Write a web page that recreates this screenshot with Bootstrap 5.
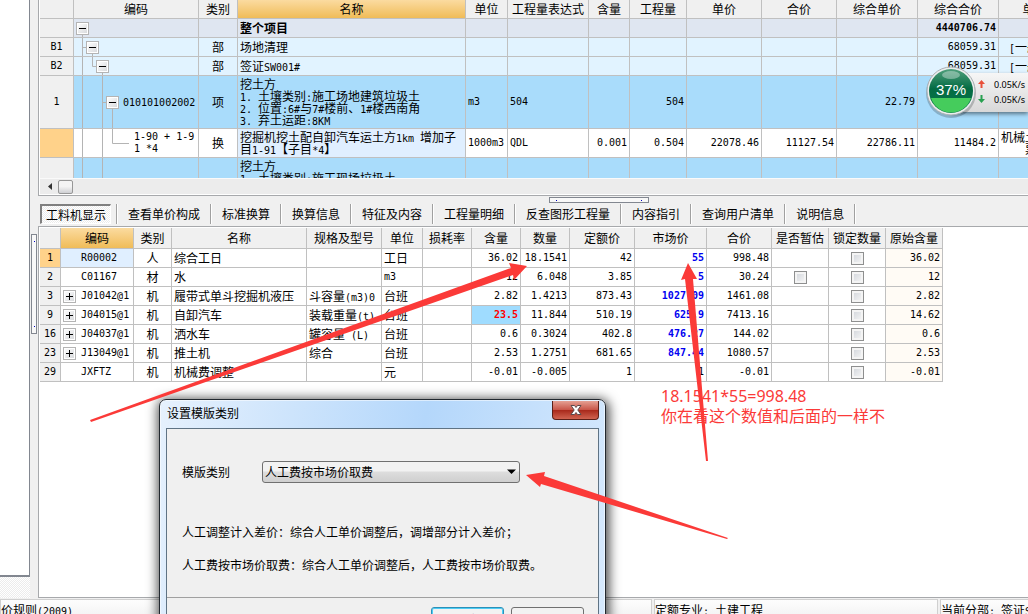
<!DOCTYPE html>
<html lang="zh-CN">
<head>
<meta charset="utf-8">
<meta name="viewport" content="width=device-width, initial-scale=1">
<title>设置模版类别</title>
<link href="https://cdn.jsdelivr.net/npm/bootstrap@5.3.0/dist/css/bootstrap.min.css" rel="stylesheet">
<script src="https://cdn.jsdelivr.net/npm/bootstrap@5.3.0/dist/js/bootstrap.bundle.min.js"></script>
<style>
  body { font: 12px/12px "Noto Sans CJK SC", sans-serif; color: #000; background: #f0f0f0; }
  button, select { font: inherit; color: inherit; }
  .ascii, .num { font-family: "DejaVu Sans Mono", monospace; font-size: 10px; line-height: 12px; }
  span.ascii { line-height: 1px; }

  /* shell */
  .side { width: 30px; }
  .side-tree { background: #fff; border-right: 1px solid #828790; border-bottom: 2px solid #828790; }
  .side-foot { height: 21px; background: repeating-conic-gradient(#fff 0 25%, #ececec 0 50%) 0 0/2px 2px; }
  .gutter { width: 8px; padding: 234px 1px 0 1px; }
  .grip { border: 1px solid #828790; background: #f8f8f8; }
  .grip::before, .grip::after { content: ""; width: 1px; height: 1px; background: #0000c0; }
  .grip-v { height: 100px; width: 6px; padding: 6px 0; }
  .grip-h { width: 100px; height: 6px; padding: 0 6px; top: 1px; left: 511px; }
  .pane { border: 1px solid #a7a9ac; border-right: 0; padding-left: 1px; }
  .pane-top { border-top: 0; background: #fff; }
  .pane-bottom { background: #fff; padding-top: 1px; }

  /* data grids */
  .sheet { table-layout: fixed; border-collapse: separate; border-spacing: 0; width: 0; }
  .sheet th, .sheet td { border-right: 1px solid #c0c0c0; border-bottom: 1px solid #c0c0c0; padding: 0 2px; overflow: hidden; white-space: nowrap; vertical-align: middle; font-weight: 400; }
  .sheet thead th { background: #f0f0f0; text-align: center; padding: 0; }
  .sheet tbody th { background: #f0f0f0; text-align: center; padding: 0; }
  .sheet thead th.on { background: linear-gradient(#fbdba0, #f0bc58); }
  .sheet tbody th.on { background: #ffd28a; }
  .sheet .num { text-align: right; }
  .sheet .c { text-align: center; }
  .sheet .wrap { white-space: normal; }
  .sheet .fee { padding-left: 10px; }
  .r18 { height: 19px; }
  .r20 { height: 21px; }
  .sheet .total td { background: #dfe6f1; font-weight: 700; }
  .part td { background: #e1f3ff; }
  .item { height: 53px; }
  .item td { background: #a9dcfb; }
  .sub { height: 29px; }
  .grid-window { height: 178px; overflow: hidden; background: #a9dcfb; }
  .tree { position: relative; }
  .tree svg { position: absolute; left: 0; top: 0; }
  .toggle { position: relative; width: 13px; height: 13px; border: 1px solid #b4b4b4; padding: 0; background: linear-gradient(135deg, #fff, #d5d7da); box-shadow: inset 0 0 0 1px #fff; display: flex; align-items: center; justify-content: center; flex: none; }
  .toggle::before { content: ""; width: 7px; height: 1px; background: #000; position: absolute; }
  .toggle.plus::after { content: ""; width: 1px; height: 7px; background: #000; position: absolute; }
  .lv1 { margin-left: 10px; } .lv2 { margin-left: 20px; } .lv3 { margin-left: 30px; } .lv4 { margin-left: 58px; }
  .code { padding-left: 5px; }
  .leaf { padding-left: 18px; }
  .sheet .price { color: #0000f0; font-weight: 700; }
  .sheet .warn { background: #9fdcff; color: #f00; font-weight: 700; }
  .sheet .orig { background: #fffbf5; }
  .sheet .cur { background: #e0efff; }
  .tick { appearance: none; width: 13px; height: 13px; margin: 0; display: block; border: 1px solid #8e8f8f; background: linear-gradient(135deg, #cfd3d9, #f8f8f8); box-shadow: inset 0 0 0 2px #f4f4f4; margin-inline: auto; }

  /* scrollbar */
  .hbar { height: 17px; background: #ececec; border-top: 1px solid #fafafa; border-bottom: 1px solid #fff; }
  .hbar .thumb { width: 15px; height: 14px; border: 1px solid #979797; border-radius: 2px; background: linear-gradient(#f4f4f4 45%, #cfd0d3); }

  /* tabs */
  .tabs { height: 30px; padding: 8px 0 2px 2px; }
  .tabs button { border: 0; border-right: 1px solid #a0a0a0; box-shadow: 1px 0 #fff; background: none; padding: 0 10px; margin-right: 1px; height: 20px; white-space: nowrap; }
  .tabs button.on { border: solid; border-width: 2px 1px 1px 2px; border-color: #808080 #fff #fff #808080; box-shadow: none; padding: 0 4px; margin: 0; width: 71px; background: repeating-conic-gradient(#fff 0 25%, #ececec 0 50%) 0 0/2px 2px; }
  .tabs .gap { width: 6px; margin-right: 1px; border-right: 1px solid #a0a0a0; height: 20px; box-shadow: 1px 0 #fff; }

  /* status bar */
  .status { height: 15px; overflow: hidden; margin-top: 1px; gap: 2px; }
  .status div { height: 24px; line-height: 19px; border: 1px solid #d0d0d0; background: linear-gradient(#fdfdfd, #f0f0f0); white-space: nowrap; overflow: hidden; flex: none; }
  .st-a { width: 652px; } .st-b { width: 284px; } .st-c { width: 200px; }

  /* dialog */
  .dlg { left: 159px; top: 399px; width: 447px; height: 250px; padding: 1px 6px 6px 6px; border: 1px solid #22282f; border-radius: 7px; background: linear-gradient(100deg, #e6f1fd, #b4d7fb 55%, #d8eafd); box-shadow: 0 0 0 1px #fff8 inset, 1px 2px 12px 2px #000b; }
  .dlg-title { height: 27px; }
  .dlg-title h1 { font: inherit; margin: 0; padding: 6px 1px; }
  .dlg-title .x { width: 47px; height: 19px; border: 1px solid #5c2018; border-top: 0; border-radius: 0 0 4px 4px; padding: 0; background: linear-gradient(#e5a093, #c9574a 48%, #a92a1c 52%, #d06350); }
  .dlg-body { height: 214px; border: 1px solid #5f7384; background: #f0f0f0; }
  .dlg-body .fields { padding: 32px 15px 0 15px; height: 168px; }
  .dlg-body label { width: 80px; }
  .dlg-body .hint { margin: 0 0 21px; }
  .pick { margin-bottom: 43px; }
  .combo { appearance: none; width: 258px; height: 22px; padding: 0 2px; border: 1px solid #707070; border-radius: 3px; background: linear-gradient(#f2f2f2 45%, #dddddd 50%, #cfcfcf); }
  .combo-box svg { right: 4px; top: 8px; pointer-events: none; }
  .dlg-foot { border-top: 1px solid #a0a0a0; padding: 9px 14px; gap: 7px; }
  .dlg-foot button { width: 73px; height: 25px; border: 1px solid #707070; border-radius: 3px; background: linear-gradient(#f2f2f2 50%, #d4d4d4); padding: 0; }
  .dlg-foot .ok { border-color: #2c90b8; box-shadow: inset 0 0 0 1px #4ccdf5; }

  /* annotations and speed widget */
  .note { left: 661px; top: 386px; color: #fb3a38; font: 16px/20px "Noto Sans", "Noto Sans CJK SC", sans-serif; }
  .speed { right: 0; top: 66px; height: 50px; width: 102px; padding-top: 7px; }
  .speed .pill { margin-left: 25px; height: 39px; background: linear-gradient(#f6f6f6, #d8d8d8); box-shadow: 0 2px 4px #0007; font: 9px/15px "Noto Sans", sans-serif; padding: 0 0 2px 26px; }
  .speed svg.ball { left: -2px; top: -1px; }
</style>
</head>
<body>
<div class="vh-100 d-flex flex-column overflow-hidden position-relative">
  <div class="d-flex flex-grow-1 overflow-hidden">
    <aside class="side d-flex flex-column flex-shrink-0">
      <div class="side-tree flex-grow-1"></div>
      <div class="side-foot"></div>
    </aside>
    <div class="gutter flex-shrink-0"><div class="grip grip-v d-flex flex-column justify-content-between align-items-center"></div></div>

    <main class="flex-grow-1 d-flex flex-column overflow-hidden">
      <section class="pane pane-top">
        <div class="grid-window">
          <table class="sheet">
            <colgroup><col style="width:34px"><col style="width:125px"><col style="width:39px"><col style="width:228px"><col style="width:42px"><col style="width:81px"><col style="width:41px"><col style="width:57px"><col style="width:75px"><col style="width:75px"><col style="width:81px"><col style="width:81px"><col style="width:120px"></colgroup>
            <thead><tr class="r18"><th></th><th>编码</th><th>类别</th><th class="on">名称</th><th>单位</th><th>工程量表达式</th><th>含量</th><th>工程量</th><th>单价</th><th>合价</th><th>综合单价</th><th>综合合价</th><th>单价构成文件</th></tr></thead>
            <tbody>
              <tr class="r18 total"><th></th><td class="tree"><svg width="30" height="19" fill="none" stroke="#b4b4b4"><path d="M8.5 9V19"/></svg><button class="toggle" aria-label="折叠"></button></td><td></td><td>整个项目</td><td></td><td></td><td></td><td></td><td></td><td></td><td></td><td class="num">4440706.74</td><td></td></tr>
              <tr class="r18 part"><th class="ascii">B1</th><td class="tree"><svg width="40" height="19" fill="none" stroke="#b4b4b4"><path d="M8.5 0V19M8.5 9.5H16M18.5 9V19"/></svg><button class="toggle lv1" aria-label="折叠"></button></td><td class="c">部</td><td>场地清理</td><td></td><td></td><td></td><td></td><td></td><td></td><td></td><td class="num">68059.31</td><td class="fee"><span class="ascii">[</span>一般土建工程<span class="ascii">]</span></td></tr>
              <tr class="r18 part"><th class="ascii">B2</th><td class="tree"><svg width="40" height="19" fill="none" stroke="#b4b4b4"><path d="M8.5 0V19M18.5 0V9.5H26M28.5 9V19"/></svg><button class="toggle lv2" aria-label="折叠"></button></td><td class="c">部</td><td>签证<span class="ascii">SW001#</span></td><td></td><td></td><td></td><td></td><td></td><td></td><td></td><td class="num">68059.31</td><td class="fee"><span class="ascii">[</span>一般土建工程<span class="ascii">]</span></td></tr>
              <tr class="item"><th class="ascii">1</th><td class="tree"><svg width="50" height="53" fill="none" stroke="#b4b4b4"><path d="M8.5 0V53M28.5 0V53M28.5 26.5H36M38.5 26V53"/></svg><div class="d-flex align-items-center"><button class="toggle lv3" aria-label="折叠"></button><span class="ascii ms-1">010101002002</span></div></td><td class="c">项</td><td>挖土方<br><span class="ascii">1. </span>土壤类别<span class="ascii">:</span>施工场地建筑垃圾土<br><span class="ascii">2. </span>位置<span class="ascii">:6#</span>与<span class="ascii">7#</span>楼前、<span class="ascii">1#</span>楼西南角<br><span class="ascii">3. </span>弃土运距<span class="ascii">:8KM</span></td><td class="ascii">m3</td><td class="ascii">504</td><td></td><td class="num">504</td><td></td><td></td><td class="num">22.79</td><td></td><td></td></tr>
              <tr class="sub"><th class="on"></th><td class="tree bg-white"><svg width="60" height="29" fill="none" stroke="#b4b4b4"><path d="M8.5 0V29M28.5 0V29M38.5 0V14.5H55"/></svg><div class="ascii lv4">1-90 + 1-9<br>1 *4</div></td><td class="c bg-white">换</td><td class="cur wrap">挖掘机挖土配自卸汽车运土方<span class="ascii">1km </span>增加子<br>目<span class="ascii">1-91</span>【子目<span class="ascii">*4</span>】</td><td class="ascii bg-white">1000m3</td><td class="ascii bg-white">QDL</td><td class="num bg-white">0.001</td><td class="num bg-white">0.504</td><td class="num bg-white">22078.46</td><td class="num bg-white">11127.54</td><td class="num bg-white">22786.11</td><td class="num bg-white">11484.2</td><td class="bg-white">机械土石方工程<br>　　票据</td></tr>
              <tr class="item"><th></th><td class="tree"><svg width="50" height="53" fill="none" stroke="#b4b4b4"><path d="M8.5 0V53M28.5 0V53"/></svg></td><td></td><td>挖土方<br><span class="ascii">1. </span>土壤类别<span class="ascii">:</span>施工现场垃圾土<br><span class="ascii">2. </span>位置<br><span class="ascii">3. </span>弃土运距</td><td></td><td></td><td></td><td></td><td></td><td></td><td></td><td></td><td></td></tr>
            </tbody>
          </table>
        </div>
        <div class="hbar d-flex align-items-center">
          <svg class="mx-1" width="10" height="9" aria-hidden="true"><path d="M8 1V8L4 4.500Z" fill="#333"/></svg><div class="thumb"></div>
        </div>
      </section>

      <nav class="tabs d-flex position-relative flex-shrink-0">
        <div class="grip grip-h d-flex justify-content-between align-items-center position-absolute"></div>
        <button class="on">工料机显示</button><span class="gap"></span>
        <button>查看单价构成</button><button>标准换算</button><button>换算信息</button><button>特征及内容</button><button>工程量明细</button><button>反查图形工程量</button><button>内容指引</button><button>查询用户清单</button><button>说明信息</button>
      </nav>

      <section class="pane pane-bottom flex-grow-1 overflow-hidden">
        <table class="sheet">
          <colgroup><col style="width:21px"><col style="width:73px"><col style="width:38px"><col style="width:135px"><col style="width:75px"><col style="width:41px"><col style="width:49px"><col style="width:49px"><col style="width:49px"><col style="width:65px"><col style="width:72px"><col style="width:65px"><col style="width:57px"><col style="width:57px"><col style="width:57px"></colgroup>
          <thead><tr class="r20"><th></th><th class="on">编码</th><th>类别</th><th>名称</th><th>规格及型号</th><th>单位</th><th>损耗率</th><th>含量</th><th>数量</th><th>定额价</th><th>市场价</th><th>合价</th><th>是否暂估</th><th>锁定数量</th><th>原始含量</th></tr></thead>
          <tbody>
            <tr class="r18"><th class="ascii on">1</th><td class="ascii cur"><span class="leaf">R00002</span></td><td class="c">人</td><td>综合工日</td><td></td><td>工日</td><td></td><td class="num">36.02</td><td class="num">18.1541</td><td class="num">42</td><td class="num price">55</td><td class="num">998.48</td><td></td><td><input type="checkbox" class="tick" aria-label="锁定数量"></td><td class="num orig">36.02</td></tr>
            <tr class="r18"><th class="ascii">2</th><td class="ascii"><span class="leaf">C01167</span></td><td class="c">材</td><td>水</td><td></td><td class="ascii">m3</td><td></td><td class="num">12</td><td class="num">6.048</td><td class="num">3.85</td><td class="num price">5</td><td class="num">30.24</td><td><input type="checkbox" class="tick" aria-label="是否暂估"></td><td><input type="checkbox" class="tick" aria-label="锁定数量"></td><td class="num orig">12</td></tr>
            <tr class="r18"><th class="ascii">3</th><td class="ascii"><div class="d-flex align-items-center"><button class="toggle plus" aria-label="展开"></button><span class="code">J01042@1</span></div></td><td class="c">机</td><td>履带式单斗挖掘机液压</td><td>斗容量<span class="ascii">(m3)0</span></td><td>台班</td><td></td><td class="num">2.82</td><td class="num">1.4213</td><td class="num">873.43</td><td class="num price">1027.09</td><td class="num">1461.08</td><td></td><td><input type="checkbox" class="tick" aria-label="锁定数量"></td><td class="num orig">2.82</td></tr>
            <tr class="r18"><th class="ascii">9</th><td class="ascii"><div class="d-flex align-items-center"><button class="toggle plus" aria-label="展开"></button><span class="code">J04015@1</span></div></td><td class="c">机</td><td>自卸汽车</td><td>装载重量<span class="ascii">(t)</span></td><td>台班</td><td></td><td class="num warn">23.5</td><td class="num">11.844</td><td class="num">510.19</td><td class="num price">625.9</td><td class="num">7413.16</td><td></td><td><input type="checkbox" class="tick" aria-label="锁定数量"></td><td class="num orig">14.62</td></tr>
            <tr class="r18"><th class="ascii">16</th><td class="ascii"><div class="d-flex align-items-center"><button class="toggle plus" aria-label="展开"></button><span class="code">J04037@1</span></div></td><td class="c">机</td><td>洒水车</td><td>罐容量<span class="ascii"> (L)</span></td><td>台班</td><td></td><td class="num">0.6</td><td class="num">0.3024</td><td class="num">402.8</td><td class="num price">476.27</td><td class="num">144.02</td><td></td><td><input type="checkbox" class="tick" aria-label="锁定数量"></td><td class="num orig">0.6</td></tr>
            <tr class="r18"><th class="ascii">23</th><td class="ascii"><div class="d-flex align-items-center"><button class="toggle plus" aria-label="展开"></button><span class="code">J13049@1</span></div></td><td class="c">机</td><td>推土机</td><td>综合</td><td>台班</td><td></td><td class="num">2.53</td><td class="num">1.2751</td><td class="num">681.65</td><td class="num price">847.44</td><td class="num">1080.57</td><td></td><td><input type="checkbox" class="tick" aria-label="锁定数量"></td><td class="num orig">2.53</td></tr>
            <tr class="r18"><th class="ascii">29</th><td class="ascii"><span class="leaf">JXFTZ</span></td><td class="c">机</td><td>机械费调整</td><td></td><td>元</td><td></td><td class="num">-0.01</td><td class="num">-0.005</td><td class="num">1</td><td class="num">1</td><td class="num">-0.01</td><td></td><td><input type="checkbox" class="tick" aria-label="锁定数量"></td><td class="num orig">-0.01</td></tr>
          </tbody>
        </table>
      </section>
    </main>
  </div>

  <footer class="status d-flex flex-shrink-0">
    <div class="st-a">价规则<span class="ascii">(2009)</span></div>
    <div class="st-b">定额专业<span class="ascii">: </span>土建工程</div>
    <div class="st-c">当前分部<span class="ascii">: </span>签证<span class="ascii">SW001#</span></div>
  </footer>

  <section class="dlg position-absolute" role="dialog" aria-labelledby="dlg-name">
    <header class="dlg-title d-flex justify-content-between align-items-start">
      <h1 id="dlg-name">设置模版类别</h1>
      <button class="x" aria-label="关闭"><svg class="d-block mx-auto" width="12" height="10" viewBox="0 0 12 10"><path d="M1 .5H4.500L6 2.500 7.500 .5H11L7.800 5 11 9.500H7.500L6 7.500 4.500 9.500H1L4.200 5Z" fill="#fff" stroke="#5b4a4c"/></svg></button>
    </header>
    <div class="dlg-body">
      <div class="fields">
        <div class="pick d-flex align-items-center">
          <label for="kind">模版类别</label>
          <div class="combo-box position-relative"><select id="kind" class="combo"><option>人工费按市场价取费</option></select><svg class="position-absolute" width="9" height="6"><path d="M0 .5H9L4.500 5Z"/></svg></div>
        </div>
        <p class="hint">人工调整计入差价：综合人工单价调整后，调增部分计入差价；</p>
        <p class="hint">人工费按市场价取费：综合人工单价调整后，人工费按市场价取费。</p>
      </div>
      <div class="dlg-foot d-flex justify-content-end"><button class="ok">确定</button><button>取消</button></div>
    </div>
  </section>

  <div class="note position-absolute">18.1541*55=998.48<br>你在看这个数值和后面的一样不</div>

  <svg class="position-absolute top-0 start-0 pe-none" width="1028" height="614" fill="#fb3a38" aria-hidden="true">
    <path d="M90 420L511 268 509 263 527 266 514 280 513 275 91 422Z"/>
    <path d="M708 461L706 461 685 279 681 280 688 263 697 279 693 279Z"/>
    <path d="M728 538L544 476 545 472 526 475 540 487 541 484 727 539Z"/>
  </svg>

  <div class="speed position-absolute">
    <div class="pill d-flex flex-column justify-content-center">
      <div class="d-flex align-items-center"><svg class="me-2" width="9" height="8"><path d="M4.500 0L8 4H5.500V8H3.500V4H1Z" fill="#e8503a"/></svg>0.05K/s</div>
      <div class="d-flex align-items-center"><svg class="me-2" width="9" height="8"><path d="M4.500 8L8 4H5.500V0H3.500V4H1Z" fill="#28a050"/></svg>0.05K/s</div>
    </div>
    <svg class="ball position-absolute" width="54" height="54" viewBox="0 0 54 54">
      <defs><linearGradient id="g" x2="0" y2="1"><stop offset="0" stop-color="#4f9f7c"/><stop offset=".45" stop-color="#046b43"/><stop offset="1" stop-color="#067a4a"/></linearGradient></defs>
      <circle cx="27" cy="28" r="25" fill="#0003"/>
      <circle cx="27" cy="26" r="24" fill="#eceeee" stroke="#aab0b4"/>
      <circle cx="27" cy="26" r="22" fill="url(#g)"/>
      <path d="M7 33H47A21 21 0 0 1 7 33Z" fill="#45cc5c"/>
      <ellipse cx="27" cy="10" rx="9" ry="4" fill="#fff" opacity=".35"/>
      <text x="27" y="30" text-anchor="middle" fill="#fff" font-family="Liberation Sans, sans-serif" font-size="15">37%</text>
    </svg>
  </div>
</div>
</body>
</html>
